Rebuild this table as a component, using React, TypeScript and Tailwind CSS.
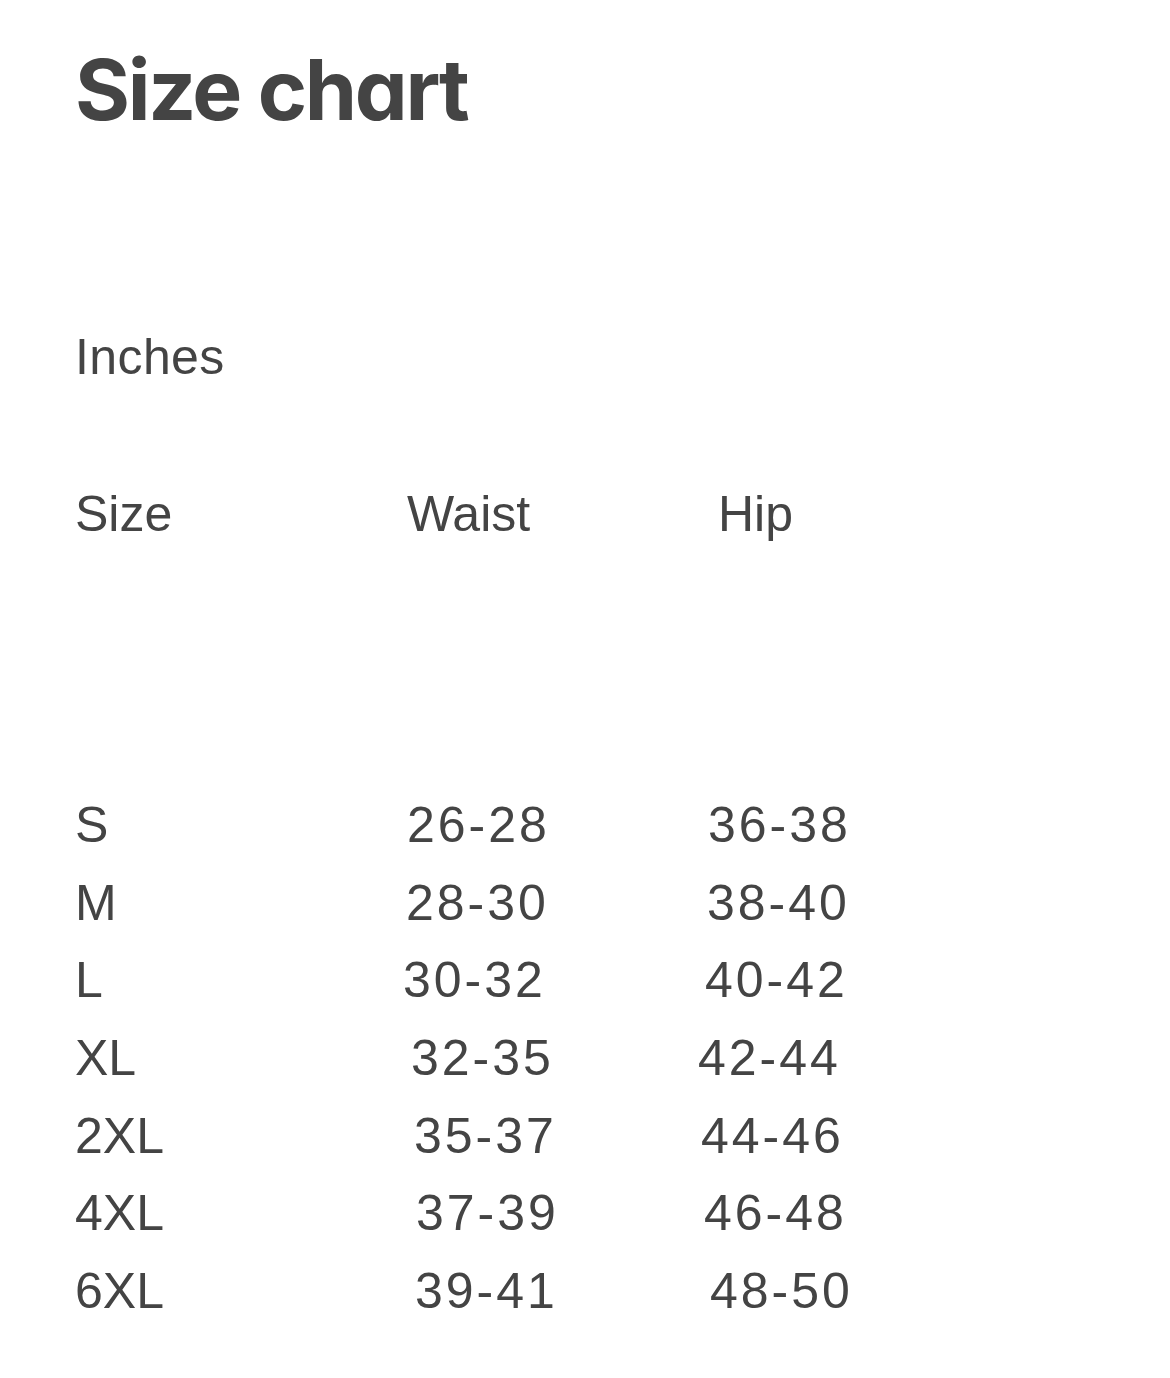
import React from "react";

const rows: { size: string; waist: string; wpad: string; hip: string; hpad: string }[] = [
  { size: "S", waist: "26-28", wpad: "pl-[7px]", hip: "36-38", hpad: "pl-[18px]" },
  { size: "M", waist: "28-30", wpad: "pl-[6px]", hip: "38-40", hpad: "pl-[17px]" },
  { size: "L", waist: "30-32", wpad: "pl-[3px]", hip: "40-42", hpad: "pl-[15px]" },
  { size: "XL", waist: "32-35", wpad: "pl-[11px]", hip: "42-44", hpad: "pl-[8px]" },
  { size: "2XL", waist: "35-37", wpad: "pl-[14px]", hip: "44-46", hpad: "pl-[11px]" },
  { size: "4XL", waist: "37-39", wpad: "pl-[16px]", hip: "46-48", hpad: "pl-[14px]" },
  { size: "6XL", waist: "39-41", wpad: "pl-[15px]", hip: "48-50", hpad: "pl-[20px]" },
];

export default function App() {
  return (
    <div className="min-h-[1378px] w-[1170px] bg-white pl-[75px] text-[#444444] [font-family:'Liberation_Sans',Arial,sans-serif]">
      <h1 className="pt-[48px] text-[84px] font-bold leading-[84px] tracking-[-2.3px] [font-family:Inter,'Liberation_Sans',sans-serif] [font-feature-settings:'cv11']">
        Size chart
      </h1>
      <div className="mt-[200px] text-[50px] leading-[50px] tracking-[0.4px]">Inches</div>
      <div className="mt-[107px] grid grid-cols-[325px_290px_1fr] text-[50px] leading-[50px]">
        <div>Size</div>
        <div className="pl-[7px]">Waist</div>
        <div className="pl-[28px]">Hip</div>
      </div>
      <div className="mt-[261px] flex flex-col gap-[27.67px] text-[50px] leading-[50px]">
        {rows.map((r) => (
          <div key={r.size} className="grid grid-cols-[325px_290px_1fr]">
            <div>{r.size}</div>
            <div className={`${r.wpad} tracking-[3px]`}>{r.waist}</div>
            <div className={`${r.hpad} tracking-[3px]`}>{r.hip}</div>
          </div>
        ))}
      </div>
    </div>
  );
}
